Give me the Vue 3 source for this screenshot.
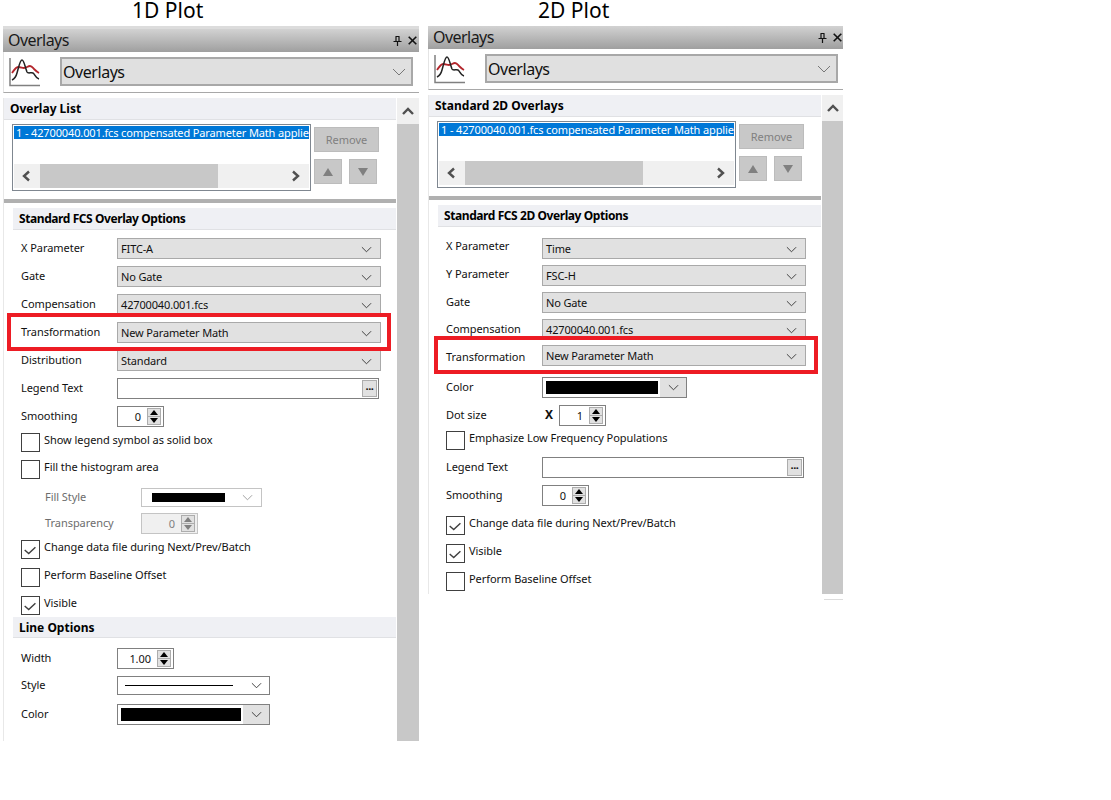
<script setup>
const panels = [
  {
    key: 'one', plot: '1D Plot', listTitle: 'Overlay List', optionsTitle: 'Standard FCS Overlay Options',
    rows: [
      { type: 'combo', label: 'X Parameter', value: 'FITC-A', mt: 8 },
      { type: 'combo', label: 'Gate', value: 'No Gate', mt: 7 },
      { type: 'combo', label: 'Compensation', value: '42700040.001.fcs', mt: 7 },
      { type: 'combo', label: 'Transformation', value: 'New Parameter Math', mt: 7, hl: true },
      { type: 'combo', label: 'Distribution', value: 'Standard', mt: 7 },
      { type: 'legend', label: 'Legend Text', mt: 7 },
      { type: 'spin', label: 'Smoothing', value: '0', mt: 7, w: 47 },
      { type: 'check', label: 'Show legend symbol as solid box', mt: 6 },
      { type: 'check', label: 'Fill the histogram area', mt: 8 },
      { type: 'fill', label: 'Fill Style', mt: 9 },
      { type: 'spin', label: 'Transparency', value: '0', mt: 6, w: 57, off: true },
      { type: 'check', label: 'Change data file during Next/Prev/Batch', mt: 6, on: true },
      { type: 'check', label: 'Perform Baseline Offset', mt: 9 },
      { type: 'check', label: 'Visible', mt: 9, on: true },
      { type: 'head', label: 'Line Options', mt: 2 },
      { type: 'spin', label: 'Width', value: '1.00', mt: 10, w: 57 },
      { type: 'style', label: 'Style', mt: 7 },
      { type: 'color', label: 'Color', mt: 9, w: 153 }
    ]
  },
  {
    key: 'two', plot: '2D Plot', listTitle: 'Standard 2D Overlays', optionsTitle: 'Standard FCS 2D Overlay Options',
    rows: [
      { type: 'combo', label: 'X Parameter', value: 'Time', mt: 11, shift: -2 },
      { type: 'combo', label: 'Y Parameter', value: 'FSC-H', mt: 6, shift: -1 },
      { type: 'combo', label: 'Gate', value: 'No Gate', mt: 6 },
      { type: 'combo', label: 'Compensation', value: '42700040.001.fcs', mt: 6 },
      { type: 'combo', label: 'Transformation', value: 'New Parameter Math', mt: 5, hl: true, shift: 2 },
      { type: 'color', label: 'Color', mt: 11, w: 145 },
      { type: 'spin', label: 'Dot size', value: '1', mt: 7, w: 47, times: true },
      { type: 'check', label: 'Emphasize Low Frequency Populations', mt: 5 },
      { type: 'legend', label: 'Legend Text', mt: 7 },
      { type: 'spin', label: 'Smoothing', value: '0', mt: 7, w: 47 },
      { type: 'check', label: 'Change data file during Next/Prev/Batch', mt: 10, on: true },
      { type: 'check', label: 'Visible', mt: 9, on: true },
      { type: 'check', label: 'Perform Baseline Offset', mt: 9 }
    ]
  }
]
</script>

<template>
  <div class="page">
    <section v-for="p in panels" :key="p.key" class="column" :class="p.key">
      <h1 class="plot">{{ p.plot }}</h1>
      <div class="panel">
        <header class="titlebar">
          <span class="title">Overlays</span>
          <svg class="pin" viewBox="0 0 9 10" width="9" height="10">
            <path d="M2.500 .5h4M3 .5v5M6 .5v5M.5 5.500h8M4.500 5.500v4.500" fill="none" stroke="#111" stroke-width="1.200" />
          </svg>
          <svg class="close" viewBox="0 0 9 9" width="9" height="9">
            <path d="M.7 .7l7.600 7.600M8.300 .7L.7 8.300" fill="none" stroke="#111" stroke-width="1.600" />
          </svg>
        </header>

        <div class="toolbar">
          <svg class="plot-icon" viewBox="0 0 31 30" width="31" height="30">
            <path d="M1 1v27.500h30" fill="none" stroke="#808080" stroke-width="1.500" />
            <path d="M3 16C5 13 7 10 9 10C12 10 13 11 15 11C17 11 19 9 21 9C23 9 24 11 25 12C27 14 28 15 30 16" fill="none" stroke="#b3262c" stroke-width="1.800" />
            <path d="M3 23C5 22 7 20 8 16C10 9 11 3 13 3C15 3 16 10 18 15C19 17 22 15 24 16C26 17 26 21 30 22" fill="none" stroke="#222" stroke-width="1.500" />
          </svg>
          <div class="main-select">
            <span>Overlays</span>
            <svg viewBox="0 0 14 8" width="14" height="8"><path d="M1 1l6 6 6-6" fill="none" stroke="#777" stroke-width="1" /></svg>
          </div>
        </div>

        <div class="body">
          <div class="content">
            <div class="section-head first">{{ p.listTitle }}</div>
            <div class="list-area">
              <div class="listbox">
                <div class="selected">1 - 42700040.001.fcs compensated Parameter Math applie</div>
                <div class="hscroll">
                  <svg viewBox="0 0 10 12" width="10" height="12"><path d="M8 1.500L3 6l5 4.500" fill="none" stroke="#505050" stroke-width="2.400" /></svg>
                  <span class="thumb"></span>
                  <svg viewBox="0 0 10 12" width="10" height="12"><path d="M2 1.500L7 6l-5 4.500" fill="none" stroke="#505050" stroke-width="2.400" /></svg>
                </div>
              </div>
              <div class="list-actions">
                <button class="remove">Remove</button>
                <div class="arrows">
                  <button class="move"><span class="tri up"></span></button>
                  <button class="move"><span class="tri down"></span></button>
                </div>
              </div>
            </div>
            <div class="divider"></div>

            <div class="options">
              <div class="section-head options-title">{{ p.optionsTitle }}</div>
              <template v-for="r in p.rows" :key="r.label">
                <div v-if="r.type === 'head'" class="section-head line-head" :style="{ marginTop: r.mt + 'px' }">{{ r.label }}</div>

                <div v-else-if="r.type === 'check'" class="row check-row" :style="{ marginTop: r.mt + 'px' }">
                  <span class="checkbox">
                    <svg v-if="r.on" viewBox="0 0 19 19" width="17" height="17"><path d="M3 10l4.500 4L15 7" fill="none" stroke="#404040" stroke-width="1.600" /></svg>
                  </span>
                  <span class="check-label">{{ r.label }}</span>
                </div>

                <div v-else class="row" :class="{ hl: r.hl, sub: r.type === 'fill' || r.off }" :style="{ marginTop: r.mt + 'px' }">
                  <span class="label" :style="{ marginTop: (r.shift || 0) * 2 + 'px' }">{{ r.label }}</span>

                  <div v-if="r.type === 'combo'" class="combo">
                    <span>{{ r.value }}</span>
                    <svg viewBox="0 0 12 7" width="11" height="7"><path d="M1 1l5 5 5-5" fill="none" stroke="#333" stroke-width="1" /></svg>
                  </div>

                  <div v-else-if="r.type === 'legend'" class="legend">
                    <span class="dots">...</span>
                  </div>

                  <template v-else-if="r.type === 'spin'">
                    <span v-if="r.times" class="times">X</span>
                    <div class="spin" :class="{ off: r.off }" :style="{ width: r.w + 'px' }">
                      <span class="spin-value">{{ r.value }}</span>
                      <span class="spin-arrows">
                        <span class="spin-half"><span class="tri up small"></span></span>
                        <span class="spin-half"><span class="tri down small"></span></span>
                      </span>
                    </div>
                  </template>

                  <div v-else-if="r.type === 'fill'" class="fill-combo">
                    <span class="fill-swatch"></span>
                    <svg viewBox="0 0 12 7" width="11" height="7"><path d="M1 1l5 5 5-5" fill="none" stroke="#999" stroke-width="1" /></svg>
                  </div>

                  <div v-else-if="r.type === 'style'" class="style-combo">
                    <span class="style-line"></span>
                    <svg viewBox="0 0 12 7" width="11" height="7"><path d="M1 1l5 5 5-5" fill="none" stroke="#333" stroke-width="1" /></svg>
                  </div>

                  <div v-else-if="r.type === 'color'" class="color-combo" :style="{ width: r.w + 'px' }">
                    <span class="color-swatch"></span>
                    <span class="color-button">
                      <svg viewBox="0 0 12 7" width="11" height="7"><path d="M1 1l5 5 5-5" fill="none" stroke="#333" stroke-width="1" /></svg>
                    </span>
                  </div>
                </div>
              </template>
            </div>
          </div>

          <aside class="vscroll">
            <span class="vscroll-button">
              <svg viewBox="0 0 12 8" width="12" height="8"><path d="M1 7l5-5 5 5" fill="none" stroke="#505050" stroke-width="2.400" /></svg>
            </span>
          </aside>
        </div>
      </div>
      <div class="tail"></div>
    </section>
  </div>
</template>

<style scoped>
.page {
  display: flex;
  gap: 9px;
  padding-left: 3px;
  font-family: "Noto Sans", "Open Sans", sans-serif;
  font-size: 11px;
  letter-spacing: -0.05px;
  color: #111;
  line-height: 14px;
}
.column.one { width: 416px; }
.column.two { width: 415px; }
.plot {
  height: 26px;
  margin: 0;
  font-size: 21px;
  font-weight: 400;
  line-height: 20px;
  letter-spacing: 0;
  color: #000;
}
.one .plot { padding-left: 129px; }
.two .plot { padding-left: 110px; }
.one .panel { border-top: 3px solid #dcdcdc; }
.titlebar {
  height: 23px;
  display: flex;
  align-items: center;
  padding-left: 5px;
  background: linear-gradient(#d2d2d2, #9f9f9f);
}
.title {
  flex: 1;
  font-size: 16px;
  line-height: 20px;
  letter-spacing: -0.55px;
  margin-bottom: 2px;
  color: #1a1a1a;
}
.pin { margin-right: 6px; }
.one .close { margin-right: 2px; }
.two .close { margin-right: 1px; }
.toolbar {
  height: 41px;
  box-sizing: border-box;
  display: flex;
  align-items: flex-start;
  padding: 5px 0 0 5px;
  border-bottom: 1px solid #a8a8a8;
  border-left: 1px solid #e4e4e4;
}
.main-select {
  width: 353px;
  height: 29px;
  box-sizing: border-box;
  margin-left: 20px;
  display: flex;
  align-items: center;
  justify-content: space-between;
  padding: 0 5px 0 1px;
  background: #e0e0e0;
  border: 2px solid #a8a8a8;
  font-size: 16px;
  letter-spacing: -0.45px;
}
.body {
  display: flex;
  margin-top: 5px;
  border-left: 1px solid #e8e8e8;
}
.content { width: 392px; }
.one .content { padding-bottom: 16px; }
.two .content { padding-bottom: 3px; }
.vscroll {
  flex: 1;
  margin-left: 1px;
  background: #c8c8c8;
}
.vscroll-button {
  height: 26px;
  display: flex;
  align-items: center;
  justify-content: center;
  background: #f0f0f0;
}
.section-head {
  height: 22px;
  box-sizing: border-box;
  padding-left: 6px;
  background: #eff0f4;
  border-bottom: 1px solid #e0e1e4;
  font-size: 12px;
  font-weight: 700;
  line-height: 22px;
  letter-spacing: 0;
  color: #000;
}
.options-title { letter-spacing: -0.42px; }
.line-head { height: 21px; line-height: 21px; }
.list-area {
  display: flex;
  gap: 3px;
  padding: 4px 0 0 8px;
}
.listbox {
  width: 299px;
  height: 67px;
  box-sizing: border-box;
  display: flex;
  flex-direction: column;
  justify-content: space-between;
  padding: 1px;
  border: 1px solid #7f8790;
}
.selected {
  height: 13px;
  overflow: hidden;
  white-space: nowrap;
  padding-left: 2px;
  background: #0078d7;
  color: #fff;
  line-height: 13px;
  letter-spacing: -0.13px;
}
.hscroll {
  height: 24px;
  display: flex;
  align-items: center;
  margin-bottom: 1px;
  padding-left: 7px;
  background: #f0f0f0;
}
.hscroll svg:last-child { margin-left: 73px; }
.thumb {
  width: 178px;
  height: 24px;
  margin-left: 9px;
  background: #c8c8c8;
}
.list-actions { padding-top: 3px; }
.remove,
.move {
  padding: 0;
  font: inherit;
  color: #808080;
  background: #c8c8c8;
  border: 1px solid #bcbcbc;
}
.remove {
  display: block;
  width: 65px;
  height: 25px;
}
.arrows {
  display: flex;
  gap: 7px;
  margin-top: 7px;
}
.move {
  width: 28px;
  height: 25px;
  display: flex;
  align-items: center;
  justify-content: center;
}
.tri {
  width: 0;
  height: 0;
  border-left: 5px solid transparent;
  border-right: 5px solid transparent;
}
.tri.up { border-bottom: 8px solid #808080; }
.tri.down { border-top: 8px solid #808080; }
.tri.small { border-left-width: 4.500px; border-right-width: 4.500px; }
.tri.up.small { border-bottom: 5px solid #000; }
.tri.down.small { border-top: 5px solid #000; }
.divider {
  height: 4px;
  margin-top: 8px;
  background: #b0b0b0;
}
.options {
  margin: 5px 0 0 9px;
}
.row {
  position: relative;
  display: flex;
  align-items: center;
  padding-left: 8px;
}
.label {
  width: 96px;
  padding-bottom: 2px;
  flex: none;
  white-space: nowrap;
}
.sub .label {
  width: 120px;
  box-sizing: border-box;
  padding-left: 24px;
  color: #6d6d6d;
}
.hl::after {
  content: "";
  position: absolute;
  z-index: 2;
  top: -9px;
  bottom: -8px;
  border: 4px solid #ed1c24;
  pointer-events: none;
}
.one .hl::after { left: -6px; right: 5px; }
.two .hl::after { left: -4px; right: 3px; }
.combo {
  width: 264px;
  height: 21px;
  box-sizing: border-box;
  display: flex;
  align-items: center;
  justify-content: space-between;
  padding: 1px 8px 0 3px;
  background: #e1e1e1;
  border: 1px solid #a9a9a9;
  letter-spacing: -0.15px;
}
.legend {
  width: 262px;
  height: 21px;
  box-sizing: border-box;
  display: flex;
  justify-content: flex-end;
  align-items: center;
  padding-right: 1px;
  border: 1px solid #808080;
}
.dots {
  width: 15px;
  height: 17px;
  box-sizing: border-box;
  background: #e1e1e1;
  border: 1px solid #adadad;
  font-weight: 700;
  line-height: 10px;
  text-align: center;
  letter-spacing: -0.500px;
}
.spin {
  height: 21px;
  box-sizing: border-box;
  display: flex;
  align-items: center;
  justify-content: flex-end;
  padding-right: 2px;
  border: 1px solid #808080;
}
.spin-value { margin-right: 6px; }
.spin-arrows {
  width: 14px;
  height: 17px;
  box-sizing: border-box;
  display: flex;
  flex-direction: column;
  background: #adadad;
  gap: 1px;
  padding: 1px;
}
.spin-half {
  flex: 1;
  display: flex;
  align-items: center;
  justify-content: center;
  background: #e1e1e1;
}
.spin.off {
  background: #f0f0f0;
  border-color: #c4c4c4;
  color: #808080;
}
.spin.off .tri.up { border-bottom-color: #808080; }
.spin.off .tri.down { border-top-color: #808080; }
.times {
  width: 17px;
  flex: none;
  margin-bottom: 2px;
  padding-left: 3px;
  box-sizing: border-box;
  font-size: 12px;
  font-weight: 700;
}
.check-row { align-items: flex-start; }
.checkbox {
  width: 19px;
  height: 19px;
  box-sizing: border-box;
  display: flex;
  align-items: center;
  justify-content: center;
  flex: none;
  border: 1px solid #404040;
}
.check-label { margin: 0 0 0 4px; white-space: nowrap; }
.fill-combo {
  width: 121px;
  height: 19px;
  box-sizing: border-box;
  display: flex;
  align-items: center;
  padding-left: 10px;
  border: 1px solid #c4c4c4;
}
.fill-swatch {
  width: 73px;
  height: 9px;
  margin-right: 17px;
  background: #000;
}
.style-combo {
  width: 153px;
  height: 19px;
  box-sizing: border-box;
  display: flex;
  align-items: center;
  padding-left: 7px;
  border: 1px solid #808080;
}
.style-line {
  width: 108px;
  height: 1px;
  margin-right: 18px;
  background: #000;
}
.color-combo {
  height: 21px;
  box-sizing: border-box;
  display: flex;
  border: 1px solid #808080;
}
.color-swatch {
  flex: 1;
  margin: 3px 2px 3px 3px;
  background: #000;
}
.color-button {
  width: 26px;
  display: flex;
  align-items: center;
  justify-content: center;
  background: #e1e1e1;
}
.tail {
  display: none;
}
.two .tail {
  display: block;
  width: 19px;
  height: 1px;
  margin: 5px 0 0 auto;
  background: #dcdcdc;
}
</style>

<style>
body { background: #fff; }
</style>
